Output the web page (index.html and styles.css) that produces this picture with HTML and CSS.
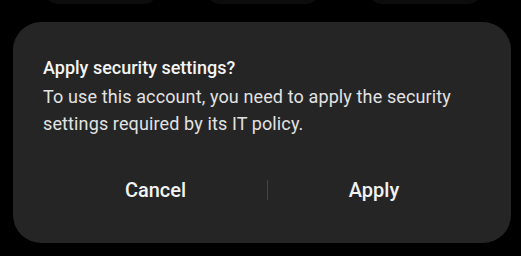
FILE: index.html
```html
<!DOCTYPE html>
<html>
<head>
<meta charset="utf-8">
<link rel="stylesheet" href="styles.css">
</head>
<body>
<div class="top-row">
  <div class="pill"></div>
  <div class="pill"></div>
  <div class="pill"></div>
</div>
<div class="dialog">
  <div class="title">Apply security settings?</div>
  <div class="message">To use this account, you need to apply the security settings required by its IT policy.</div>
  <div class="actions">
    <div class="btn btn-left">Cancel</div>
    <div class="divider"></div>
    <div class="btn btn-right">Apply</div>
  </div>
</div>
</body>
</html>
```
FILE: styles.css
```css
html, body {
  margin: 0;
  padding: 0;
  background: #000;
  width: 521px;
  height: 256px;
  overflow: hidden;
  font-family: Roboto, "Noto Sans", sans-serif;
}
.top-row {
  display: flex;
  height: 22px;
  padding-left: 45px;
  gap: 50px;
}
.pill {
  width: 112px;
  height: 26px;
  margin-top: -22px;
  border-radius: 20px;
  background: #0c0c0c;
}
.dialog {
  margin-left: 13px;
  width: 498px;
  height: 221px;
  box-sizing: border-box;
  background: #252525;
  border-radius: 28px;
  padding: 34px 30px 0 30px;
  color: #f0f0f0;
}
.title {
  font-size: 18px;
  font-weight: 500;
  line-height: 24px;
  margin-bottom: 3px;
  color: #f4f4f4;
}
.message {
  font-size: 18px;
  line-height: 27px;
  letter-spacing: 0.12px;
  color: #e2e2e2;
}
.actions {
  display: flex;
  align-items: center;
  margin-top: 41px;
  margin-left: 1px;
}
.btn {
  text-align: center;
  font-size: 20px;
  font-weight: 500;
  color: #f2f2f2;
}
.btn-left {
  width: 223px;
}
.btn-right {
  width: 212px;
}
.divider {
  width: 1px;
  height: 20px;
  background: #444;
}
```
